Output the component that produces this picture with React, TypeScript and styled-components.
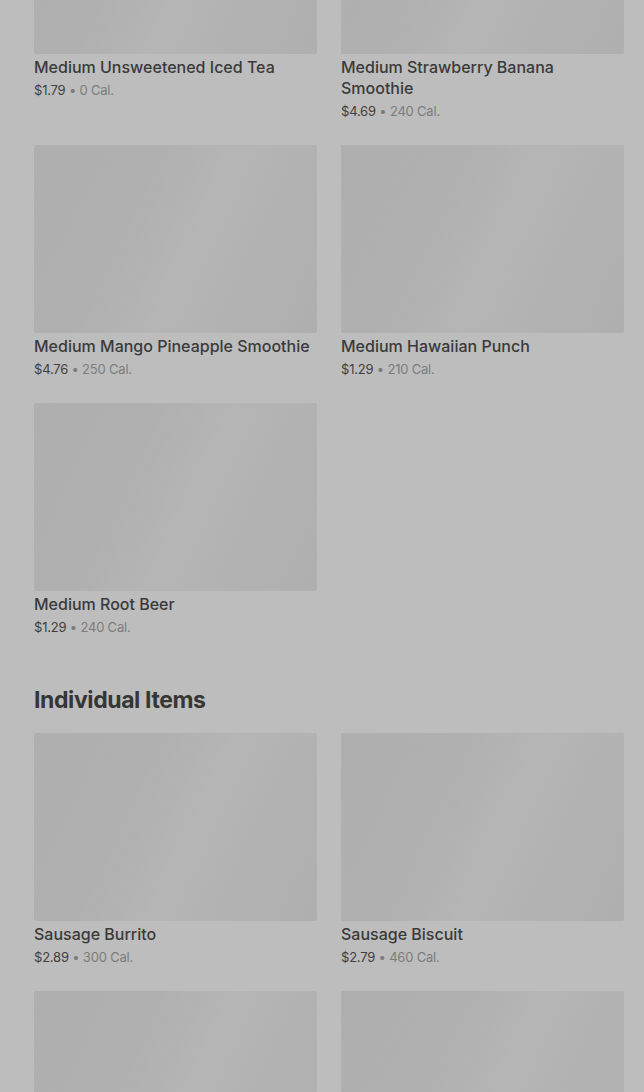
import styled, { createGlobalStyle } from 'styled-components'

const Global = createGlobalStyle`
  html, body {
    margin: 0;
    padding: 0;
    background: #bdbdbd;
    overflow: hidden;
    font-family: Inter, "Noto Sans", sans-serif;
  }
`

type Item = { name?: string; price?: string; cal?: string }

const drinks: Item[] = [
  { name: 'Medium Unsweetened Iced Tea', price: '$1.79', cal: '0 Cal.' },
  { name: 'Medium Strawberry Banana Smoothie', price: '$4.69', cal: '240 Cal.' },
  { name: 'Medium Mango Pineapple Smoothie', price: '$4.76', cal: '250 Cal.' },
  { name: 'Medium Hawaiian Punch', price: '$1.29', cal: '210 Cal.' },
  { name: 'Medium Root Beer', price: '$1.29', cal: '240 Cal.' },
]

const individual: Item[] = [
  { name: 'Sausage Burrito', price: '$2.89', cal: '300 Cal.' },
  { name: 'Sausage Biscuit', price: '$2.79', cal: '460 Cal.' },
  {},
  {},
]

// list is scrolled: first row of thumbnails starts above the viewport
const Page = styled.main`
  padding: 0 20px 0 34px;
  margin-top: -134px;
  height: 1226px;
  overflow: hidden;
`

const Section = styled.section`
  & + & {
    margin-top: 48px;
  }
`

const Heading = styled.h2`
  margin: 0 0 18px;
  font-size: 23px;
  line-height: 30px;
  font-weight: 700;
  letter-spacing: -0.4px;
  color: #363636;
`

const Grid = styled.div`
  display: grid;
  grid-template-columns: 1fr 1fr;
  column-gap: 24px;
  row-gap: 24px;
  align-items: start;
`

const Card = styled.div`
  display: flex;
  flex-direction: column;
`

const Thumb = styled.div`
  height: 188px;
  border-radius: 2px;
  background: linear-gradient(115deg, #afafaf 0%, #b0b0b0 35%, #b5b5b5 55%, #b2b2b2 75%, #afafaf 100%);
`

const Name = styled.div`
  margin-top: 3px;
  font-size: 16px;
  line-height: 21px;
  font-weight: 500;
  color: #3a3a3a;
`

const Meta = styled.div`
  margin-top: 2px;
  font-size: 13px;
  line-height: 20px;
  color: #7c7c7c;
  letter-spacing: -0.2px;
`

const Price = styled.span`
  color: #3f3f3f;
`

const MenuCard = ({ item }: { item: Item }) => (
  <Card>
    <Thumb />
    {item.name && <Name>{item.name}</Name>}
    {item.price && (
      <Meta>
        <Price>{item.price}</Price> • {item.cal}
      </Meta>
    )}
  </Card>
)

export default function App() {
  return (
    <>
      <Global />
      <Page>
        <Section>
          <Grid>
            {drinks.map((d, i) => (
              <MenuCard key={i} item={d} />
            ))}
          </Grid>
        </Section>
        <Section>
          <Heading>Individual Items</Heading>
          <Grid>
            {individual.map((d, i) => (
              <MenuCard key={i} item={d} />
            ))}
          </Grid>
        </Section>
      </Page>
    </>
  )
}
